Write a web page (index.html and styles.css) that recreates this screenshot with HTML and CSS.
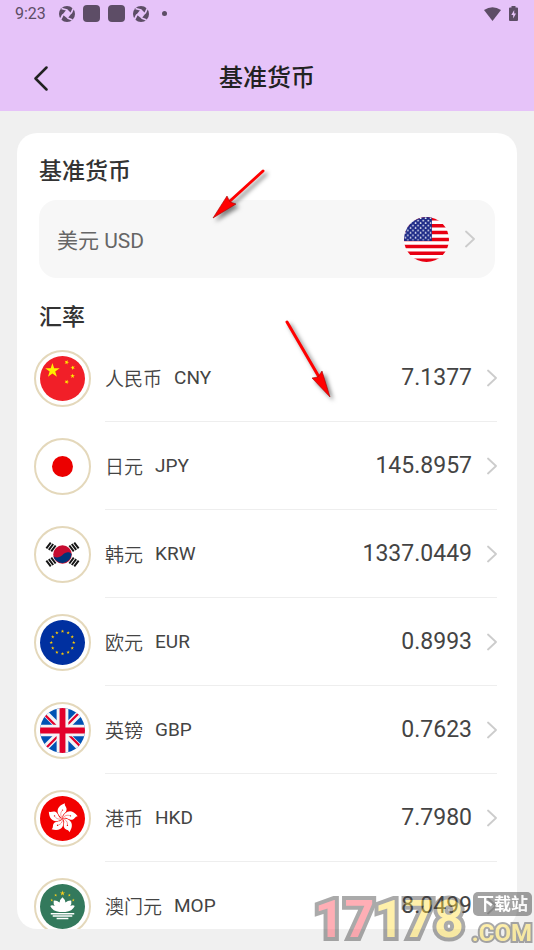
FILE: index.html
```html
<!DOCTYPE html>
<html lang="zh-CN">
<head>
    <meta charset="UTF-8">
    <meta name="viewport" content="width=device-width, initial-scale=1.0">
    <title>基准货币</title>
    <link rel="stylesheet" href="styles.css">
</head>
<body>
    <svg class="defs" width="0" height="0" aria-hidden="true">
        <defs>
            <symbol id="chevron" viewBox="0 0 10 18">
                <path d="M1 1.5 L9 9 L1 16.5" fill="none" stroke="currentColor" stroke-width="1.8" stroke-linecap="round" stroke-linejoin="round"/>
            </symbol>
            <symbol id="aperture" viewBox="0 0 16 16">
                <circle cx="8" cy="8" r="8" fill="currentColor"/>
                <path d="M8 3 L12.500 7.500 L8.500 12.500 L3.500 8.500 Z" fill="#e6c3f9"/>
                <path d="M8 4 L2.500 2.500 M12 7.500 L14.500 2 M8.500 12 L13.500 14 M4 8.500 L1.500 13.500" stroke="#e6c3f9" stroke-width="1.800"/>
            </symbol>
            <path id="star" d="M0 -1 L.2245 -.309 L.951 -.309 L.3633 .118 L.5878 .809 L0 .382 L-.5878 .809 L-.3633 .118 L-.951 -.309 L-.2245 -.309 Z"/>
            <clipPath id="round"><circle cx="23" cy="23" r="23"/></clipPath>
            <pattern id="dots" width="5.2" height="5" patternUnits="userSpaceOnUse">
                <circle cx="1.4" cy="1.2" r=".85" fill="#fff"/>
                <circle cx="4" cy="3.7" r=".85" fill="#fff"/>
            </pattern>
            <g id="petal">
                <path d="M0 0 C-6.500 -4 -7.500 -12 2.500 -15.500 C1.500 -12.500 5.500 -11.500 3.800 -7.500 C2.600 -5 -.8 -4.500 0 0 Z" fill="#fff"/>
                <path d="M0 0 C-2.400 -3 -2.200 -6 -.4 -8" fill="none" stroke="#f20000" stroke-width=".4"/>
                <circle cx="0" cy="-8.600" r=".7" fill="#f20000"/>
            </g>
        </defs>
    </svg>

    <header class="header">
        <div class="status-bar">
            <span class="time">9:23</span>
            <svg class="status-icon" width="16" height="16"><use href="#aperture"/></svg>
            <span class="status-square"></span>
            <span class="status-square"></span>
            <svg class="status-icon" width="16" height="16"><use href="#aperture"/></svg>
            <span class="status-dot"></span>
            <svg class="wifi" width="17" height="14" viewBox="0 0 17 14"><path d="M0 3 Q8.500 -2.500 17 3 L8.500 14 Z" fill="currentColor"/></svg>
            <svg width="9" height="15" viewBox="0 0 9 15">
                <path d="M2.500 0 H6.500 V1.500 H8 Q9 1.500 9 2.500 V14 Q9 15 8 15 H1 Q0 15 0 14 V2.500 Q0 1.500 1 1.500 H2.500 Z" fill="currentColor"/>
                <path d="M5.200 4 L2.300 9 H4.200 V12.500 L7 7.500 H5.200 Z" fill="#e6c3f9"/>
            </svg>
        </div>
        <div class="nav">
            <button class="back" type="button" aria-label="返回">
                <svg width="14" height="25" viewBox="0 0 14 25"><path d="M12.500 1.500 L1.500 12.500 L12.500 23.500" fill="none" stroke="currentColor" stroke-width="2.500" stroke-linecap="round" stroke-linejoin="round"/></svg>
            </button>
            <h1>基准货币</h1>
        </div>
    </header>

    <main class="content">
        <div class="card">
            <h2>基准货币</h2>
            <button class="base" type="button">
                <span class="base-name">美元 USD</span>
                <svg class="flag" viewBox="0 0 46 46">
                    <g clip-path="url(#round)">
                        <rect width="46" height="46" fill="#fff"/>
                        <path d="M0 1.77 H46 M0 8.850 H46 M0 15.920 H46 M0 23 H46 M0 30.080 H46 M0 37.150 H46 M0 44.230 H46" stroke="#e80012" stroke-width="3.54"/>
                        <rect width="28.500" height="24.500" fill="#1d2a87"/>
                        <rect width="28" height="24" fill="url(#dots)"/>
                    </g>
                </svg>
                <svg class="arrow" width="10" height="18"><use href="#chevron"/></svg>
            </button>

            <h2>汇率</h2>
            <ul class="rates">
                <li>
                    <a class="rate" href="#cny">
                        <span class="flag-ring">
                            <svg class="flag" viewBox="0 0 46 46">
                                <circle cx="23" cy="23" r="23" fill="#f11f28"/>
                                <g fill="#ffef00">
                                    <use href="#star" transform="translate(12.700 15) scale(7.800)"/>
                                    <use href="#star" transform="translate(27.300 6.400) rotate(20) scale(2.500)"/>
                                    <use href="#star" transform="translate(33.500 12) rotate(-20) scale(2.500)"/>
                                    <use href="#star" transform="translate(33.300 20.500) scale(2.500)"/>
                                    <use href="#star" transform="translate(27.300 26.500) rotate(20) scale(2.500)"/>
                                </g>
                            </svg>
                        </span>
                        <span class="rate-body">
                            <span class="name">人民币</span>
                            <span class="code">CNY</span>
                            <span class="value">7.1377</span>
                            <svg class="arrow" width="10" height="18"><use href="#chevron"/></svg>
                        </span>
                    </a>
                </li>
                <li>
                    <a class="rate" href="#jpy">
                        <span class="flag-ring">
                            <svg class="flag" viewBox="0 0 46 46"><circle cx="23" cy="23" r="10.700" fill="#ec0000"/></svg>
                        </span>
                        <span class="rate-body">
                            <span class="name">日元</span>
                            <span class="code">JPY</span>
                            <span class="value">145.8957</span>
                            <svg class="arrow" width="10" height="18"><use href="#chevron"/></svg>
                        </span>
                    </a>
                </li>
                <li>
                    <a class="rate" href="#krw">
                        <span class="flag-ring">
                            <svg class="flag" viewBox="0 0 46 46">
                                <circle cx="23" cy="23" r="9.500" fill="#c60c30"/>
                                <path d="M13.500 24 C15 27 20 26.500 23 23.500 C26 20 30.500 20 32.300 22.500 A9.500 9.500 0 0 1 13.500 24 Z" fill="#003478"/>
                                <g stroke="#151515" stroke-width="2">
                                    <path id="bars" d="M7 17.500 L11.500 11.500 M9.500 19 L14 13 M12 20.500 L16.500 14.500" transform="translate(-.5 -.7)"/>
                                    <use href="#bars" transform="translate(46 0) scale(-1 1)"/>
                                    <use href="#bars" transform="translate(0 46) scale(1 -1)"/>
                                    <use href="#bars" transform="translate(46 46) scale(-1 -1)"/>
                                </g>
                            </svg>
                        </span>
                        <span class="rate-body">
                            <span class="name">韩元</span>
                            <span class="code">KRW</span>
                            <span class="value">1337.0449</span>
                            <svg class="arrow" width="10" height="18"><use href="#chevron"/></svg>
                        </span>
                    </a>
                </li>
                <li>
                    <a class="rate" href="#eur">
                        <span class="flag-ring">
                            <svg class="flag" viewBox="0 0 46 46">
                                <circle cx="23" cy="23" r="23" fill="#0030a0"/>
                                <g fill="#ffcc00">
                                    <use href="#star" transform="translate(23 11.500) scale(1.900)"/>
                                    <use href="#star" transform="translate(28.750 13.040) scale(1.900)"/>
                                    <use href="#star" transform="translate(32.960 17.250) scale(1.900)"/>
                                    <use href="#star" transform="translate(34.500 23) scale(1.900)"/>
                                    <use href="#star" transform="translate(32.960 28.750) scale(1.900)"/>
                                    <use href="#star" transform="translate(28.750 32.960) scale(1.900)"/>
                                    <use href="#star" transform="translate(23 34.500) scale(1.900)"/>
                                    <use href="#star" transform="translate(17.250 32.960) scale(1.900)"/>
                                    <use href="#star" transform="translate(13.040 28.750) scale(1.900)"/>
                                    <use href="#star" transform="translate(11.500 23) scale(1.900)"/>
                                    <use href="#star" transform="translate(13.040 17.250) scale(1.900)"/>
                                    <use href="#star" transform="translate(17.250 13.040) scale(1.900)"/>
                                </g>
                            </svg>
                        </span>
                        <span class="rate-body">
                            <span class="name">欧元</span>
                            <span class="code">EUR</span>
                            <span class="value">0.8993</span>
                            <svg class="arrow" width="10" height="18"><use href="#chevron"/></svg>
                        </span>
                    </a>
                </li>
                <li>
                    <a class="rate" href="#gbp">
                        <span class="flag-ring">
                            <svg class="flag" viewBox="0 0 46 46">
                                <g clip-path="url(#round)">
                                    <rect width="46" height="46" fill="#0052b4"/>
                                    <path d="M0 0 L46 46 M46 0 L0 46" stroke="#f4f4f6" stroke-width="6.500"/>
                                    <path d="M-1 1 L22 24 M24 22 L47 45 M46 -1 L23 22 M23 24 L0 47" stroke="#e2002b" stroke-width="2.300"/>
                                    <path d="M23 0 V46 M0 23 H46" stroke="#f4f4f6" stroke-width="12"/>
                                    <path d="M23 0 V46 M0 23 H46" stroke="#e2002b" stroke-width="6"/>
                                </g>
                            </svg>
                        </span>
                        <span class="rate-body">
                            <span class="name">英镑</span>
                            <span class="code">GBP</span>
                            <span class="value">0.7623</span>
                            <svg class="arrow" width="10" height="18"><use href="#chevron"/></svg>
                        </span>
                    </a>
                </li>
                <li>
                    <a class="rate" href="#hkd">
                        <span class="flag-ring">
                            <svg class="flag" viewBox="0 0 46 46">
                                <circle cx="23" cy="23" r="23" fill="#f20000"/>
                                <use href="#petal" transform="translate(23 23)"/>
                                <use href="#petal" transform="translate(23 23) rotate(72)"/>
                                <use href="#petal" transform="translate(23 23) rotate(144)"/>
                                <use href="#petal" transform="translate(23 23) rotate(216)"/>
                                <use href="#petal" transform="translate(23 23) rotate(288)"/>
                            </svg>
                        </span>
                        <span class="rate-body">
                            <span class="name">港币</span>
                            <span class="code">HKD</span>
                            <span class="value">7.7980</span>
                            <svg class="arrow" width="10" height="18"><use href="#chevron"/></svg>
                        </span>
                    </a>
                </li>
                <li>
                    <a class="rate" href="#mop">
                        <span class="flag-ring">
                            <svg class="flag" viewBox="0 0 46 46">
                                <circle cx="23" cy="23" r="23" fill="#33795c"/>
                                <g fill="#f8cf1c">
                                    <use href="#star" transform="translate(23 9.500) scale(2.800)"/>
                                    <use href="#star" transform="translate(16 11.500) scale(1.600)"/>
                                    <use href="#star" transform="translate(30 11.500) scale(1.600)"/>
                                    <use href="#star" transform="translate(12 16.500) scale(1.600)"/>
                                    <use href="#star" transform="translate(34 16.500) scale(1.600)"/>
                                </g>
                                <path d="M23 13.500 Q26 16 26 19 Q29 16.500 32 17 Q32.500 20 31 22.500 Q34 21 35.500 22.500 Q33 28 26 28.500 H20 Q13 28 10.500 22.500 Q12 21 15 22.500 Q13.500 20 14 17 Q17 16.500 20 19 Q20 16 23 13.500 Z" fill="#fff"/>
                                <path d="M11 30.300 H35 M13 32.800 H33 M17 35.300 H29" stroke="#fff" stroke-width="1.500"/>
                            </svg>
                        </span>
                        <span class="rate-body">
                            <span class="name">澳门元</span>
                            <span class="code">MOP</span>
                            <span class="value">8.0499</span>
                            <svg class="arrow" width="10" height="18"><use href="#chevron"/></svg>
                        </span>
                    </a>
                </li>
            </ul>
        </div>
    </main>

    <!-- 指示箭头 -->
    <svg class="pointer pointer-base" width="70" height="66" viewBox="0 0 70 66">
        <path d="M54 7 L21 37" stroke="#ff0000" stroke-width="3" stroke-linecap="round"/>
        <path d="M4 54 L18 32 L21 38 L27 40 Z" fill="#ff0000" stroke="#a40000" stroke-width=".6"/>
    </svg>
    <svg class="pointer pointer-rate" width="66" height="92" viewBox="0 0 66 92">
        <path d="M7 7 L39 62" stroke="#ff0000" stroke-width="3" stroke-linecap="round"/>
        <path d="M50 82 L32 63 L38 62 L42 56 Z" fill="#ff0000" stroke="#a40000" stroke-width=".6"/>
    </svg>

    <!-- 水印 -->
    <div class="watermark">
        <span class="digits"><span class="red">17</span>178</span>
        <span class="mark-side">
            <span class="mark-label">下载站</span>
            <span class="mark-com">.COM</span>
        </span>
    </div>
</body>
</html>
```
FILE: styles.css
```css
* {
    box-sizing: border-box;
}

body {
    position: relative;
    display: flex;
    flex-direction: column;
    height: 100vh;
    margin: 0;
    overflow: hidden;
    background-color: #f0f0f0;
    color: #444;
    font-family: Roboto, "Noto Sans CJK SC", sans-serif;
}

.defs {
    position: absolute;
}

button {
    border: none;
    background: none;
    color: inherit;
    font-family: inherit;
    cursor: pointer;
}

svg {
    display: block;
    flex-shrink: 0;
}

.header {
    background-color: #e6c3f9;
    color: #222;
}

.status-bar {
    display: flex;
    align-items: center;
    gap: 8px;
    height: 27px;
    padding: 0 16px 0 15px;
    color: #5d4d66;
}

.time {
    margin-right: 5px;
    font-size: 16px;
}

.status-square {
    width: 17px;
    height: 17px;
    border-radius: 4px;
    background-color: currentColor;
}

.status-dot {
    width: 5px;
    height: 5px;
    margin-left: 5px;
    border-radius: 50%;
    background-color: currentColor;
}

.wifi {
    margin-left: auto;
}

.nav {
    display: grid;
    grid-template-columns: 60px 1fr 60px;
    align-items: center;
    height: 84px;
    padding-top: 18px;
}

.back {
    justify-self: end;
    padding: 0 12px;
}

h1 {
    margin: 0;
    font-size: 24px;
    font-weight: 500;
    line-height: 32px;
    text-align: center;
}

.content {
    flex: 1;
    min-height: 0;
    padding: 22px 17px 21px;
}

.card {
    height: 100%;
    padding-top: 23px;
    overflow: hidden auto;
    scrollbar-width: none;
    border-radius: 20px;
    background-color: #fff;
}

h2 {
    margin: 0 22px;
    color: #333;
    font-size: 23px;
    font-weight: 500;
    line-height: 32px;
}

.base {
    display: flex;
    align-items: center;
    gap: 16px;
    width: calc(100% - 44px);
    height: 78px;
    margin: 12px 22px 24px;
    padding: 0 20px 0 18px;
    border-radius: 18px;
    background-color: #f7f7f7;
}

.base-name {
    flex: 1;
    color: #666;
    font-size: 21px;
    text-align: left;
}

.flag {
    width: 45px;
    height: 45px;
}

.arrow {
    color: #ccc;
}

.rates {
    margin: 0;
    padding: 0;
    list-style: none;
}

.rate {
    display: flex;
    align-items: center;
    gap: 14px;
    padding: 0 20px 0 17px;
    color: inherit;
    text-decoration: none;
}

.flag-ring {
    display: flex;
    align-items: center;
    justify-content: center;
    width: 57px;
    height: 57px;
    border: 2px solid #e4d8bb;
    border-radius: 50%;
}

.rate-body {
    display: flex;
    flex: 1;
    align-items: center;
    height: 88px;
    border-bottom: 1px solid #eee;
}

.name,
.code {
    font-size: 19px;
}

.name {
    font-weight: 350;
}

.code {
    margin-left: 12px;
}

.value {
    margin: 0 15px 0 auto;
    font-size: 23px;
}

.pointer {
    position: absolute;
    filter: drop-shadow(3px 3px 2px rgba(0, 0, 0, 0.5));
    pointer-events: none;
}

.pointer-base {
    top: 164px;
    left: 209px;
}

.pointer-rate {
    top: 315px;
    left: 280px;
}

.watermark {
    position: absolute;
    right: 2px;
    bottom: 0;
    display: flex;
    align-items: flex-end;
    gap: 8px;
    opacity: 0.45;
    pointer-events: none;
}

.digits,
.mark-com {
    color: #ffdd44;
    font-weight: 700;
    paint-order: stroke fill;
}

.digits {
    font-size: 52px;
    line-height: 60px;
    -webkit-text-stroke: 8px #444;
}

.red {
    color: #ff4d5b;
}

.mark-side {
    display: flex;
    flex-direction: column;
    align-items: flex-end;
}

.mark-label {
    padding: 0 4px;
    border-radius: 5px;
    background-color: #333;
    color: #fff;
    font-size: 17px;
    font-weight: 700;
    line-height: 24px;
}

.mark-com {
    font-size: 24px;
    line-height: 34px;
    -webkit-text-stroke: 4px #444;
}
```
